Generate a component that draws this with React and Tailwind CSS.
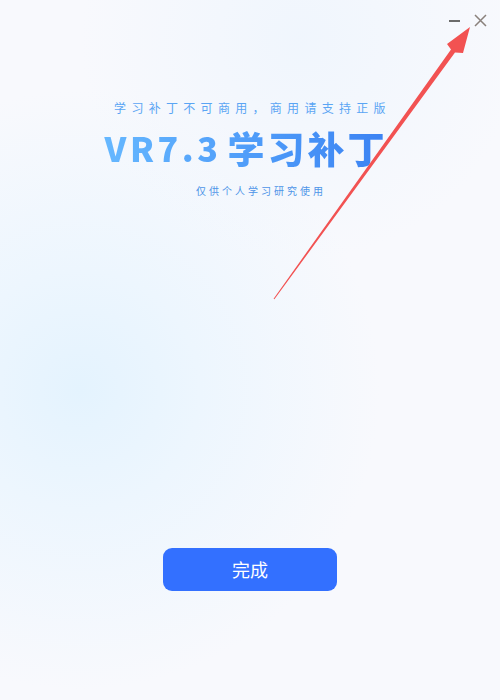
import React from 'react';

function Arrow() {
  return (
    <svg className="absolute left-0 top-0 pointer-events-none" width="500" height="700" viewBox="0 0 500 700">
      <polygon
        points="273.6,298.7 451,49.5 447,44 470,27 463,53 455,52.5 274.4,299.3"
        fill="#f25252"
      />
    </svg>
  );
}

function App() {
  return (
    <div
      className="relative w-[500px] h-[700px] overflow-hidden bg-[#f8f9fd]"
      style={{ fontFamily: '"Noto Sans CJK SC", "Noto Sans", sans-serif' }}
    >
      <div className="absolute inset-0 bg-[radial-gradient(circle_at_80px_390px,#e4f3fe_0px,#edf6fe_120px,rgba(248,249,253,0)_300px)]" />
      <div className="absolute inset-0 bg-[radial-gradient(circle_at_300px_40px,rgba(238,245,253,0.8)_0px,rgba(248,249,253,0)_220px)]" />

      <div className="relative flex flex-col h-full">
        <div className="flex justify-end items-center gap-[14px] pr-[13px] pt-[10px] h-[30px]">
          <div className="w-[11px] h-[2px] bg-[#6b6b6b] mt-[2px]" />
          <svg width="13" height="13" viewBox="0 0 13 13">
            <path d="M1 1 L12 12 M12 1 L1 12" stroke="#8a817c" strokeWidth="1.5" />
          </svg>
        </div>

        <div className="flex flex-col items-center mt-[70px]">
          <div className="text-[12px] leading-[16px] tracking-[5.3px] text-[#5aa5f4] pl-[5px]">
            学习补丁不可商用，商用请支持正版
          </div>
          <div className="mt-[10px] h-[44px] flex items-center bg-gradient-to-r from-[#66b8ff] to-[#3a80f2] bg-clip-text text-transparent font-black pr-[12px] pl-[4px]">
            <span className="text-[34px] leading-[44px] tracking-[3.5px]">VR7.3</span>
            <span className="text-[37px] leading-[44px] tracking-[3px] ml-[6px]">学习补丁</span>
          </div>
          <div className="mt-[14px] text-[10px] leading-[14px] tracking-[3px] text-[#4d94e8] pl-[22px]">
            仅供个人学习研究使用
          </div>
        </div>

        <div className="flex-1" />

        <div className="flex justify-center mb-[109px]">
          <button className="w-[174px] h-[43px] rounded-[9px] bg-[#3370ff] text-white text-[18px]">
            完成
          </button>
        </div>
      </div>

      <Arrow />
    </div>
  );
}

export default App;
